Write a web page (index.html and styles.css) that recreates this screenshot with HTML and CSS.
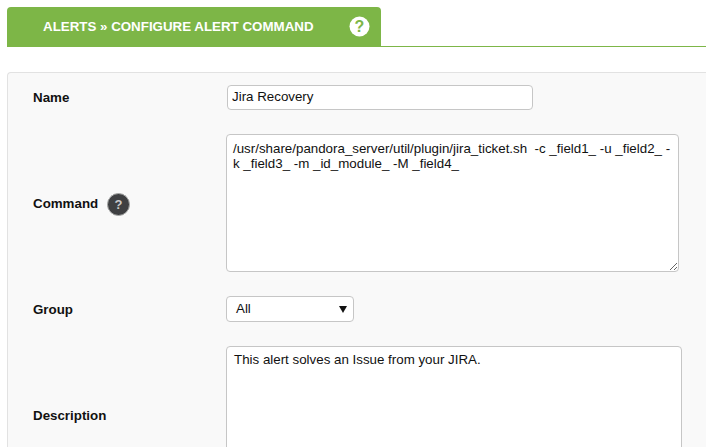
FILE: index.html
```html
<!DOCTYPE html>
<html lang="en">
<head>
  <meta charset="UTF-8">
  <meta name="viewport" content="width=device-width, initial-scale=1.0">
  <title>Configure alert command</title>
  <link rel="stylesheet" href="styles.css">
</head>
<body>
  <div class="page-header">
    <div class="header-tab">
      <h1>ALERTS &raquo; CONFIGURE ALERT COMMAND</h1>
      <svg class="help-icon" width="21" height="21" viewBox="0 0 21 21">
        <circle cx="10.5" cy="10.5" r="10" fill="#fff"/>
        <text x="10.5" y="16" text-anchor="middle" class="help-mark" fill="#7db647">?</text>
      </svg>
    </div>
  </div>
  <form class="alert-form">
    <div class="row row-name">
      <label class="label">Name</label>
      <input class="field name-input" type="text" value="Jira Recovery">
    </div>
    <div class="row row-command">
      <label class="label">Command
        <svg class="tip-icon" width="23" height="23" viewBox="0 0 23 23">
          <circle cx="11.5" cy="11.5" r="11" fill="#3f4042" stroke="#a9aaa9" stroke-width="1"/>
          <text x="11.5" y="16" text-anchor="middle" class="tip-mark" fill="#c9c9c9">?</text>
        </svg>
      </label>
      <textarea class="field command-input">/usr/share/pandora_server/util/plugin/jira_ticket.sh  -c _field1_ -u _field2_ -k _field3_ -m _id_module_ -M _field4_</textarea>
    </div>
    <div class="row row-group">
      <label class="label">Group</label>
      <div class="field group-select">
        <span>All</span>
        <span class="arrow"></span>
      </div>
    </div>
    <div class="row row-description">
      <label class="label">Description</label>
      <textarea class="field description-input">This alert solves an Issue from your JIRA.</textarea>
    </div>
  </form>
</body>
</html>
```
FILE: styles.css
```css
html, body {
  height: 100%;
  overflow: hidden;
}
body {
  margin: 0;
  padding: 7px 0 0 7px;
  box-sizing: border-box;
  display: flex;
  flex-direction: column;
  background-color: #fff;
  font-family: "Liberation Sans", Arial, sans-serif;
  font-size: 13.33px;
  color: #111;
}
.page-header {
  flex: none;
  border-bottom: 1px solid #7db647;
  height: 39px;
}
.header-tab {
  width: 374px;
  height: 40px;
  box-sizing: border-box;
  padding: 0 11px 0 36px;
  display: flex;
  align-items: center;
  justify-content: space-between;
  background-color: #7db647;
  border-radius: 4px 4px 0 0;
}
.header-tab h1 {
  margin: 0 0 2px;
  font-size: 13.33px;
  font-weight: bold;
  color: #fff;
}
.help-icon {
  margin-bottom: 1px;
}
.help-mark {
  font-size: 16px;
  font-weight: bold;
  font-family: "Liberation Sans", Arial, sans-serif;
}
.alert-form {
  flex: 1;
  min-height: 0;
  overflow: hidden;
  margin-top: 25px;
  box-sizing: border-box;
  padding-left: 25px;
  background-color: #f9f9f9;
  border: 1px solid #e2e2e2;
  border-width: 1px 0 0 1px;
  border-radius: 4px 0 0 0;
}
.row {
  display: flex;
  align-items: center;
  flex: none;
}
.label {
  width: 193px;
  flex: none;
  font-weight: bold;
  display: flex;
  align-items: center;
  gap: 9px;
}
.field {
  box-sizing: border-box;
  margin: 0;
  padding: 0 4px;
  background-color: #fff;
  border: 1px solid #c6c6c6;
  border-radius: 4px;
  font-family: "Liberation Sans", Arial, sans-serif;
  font-size: 13.33px;
  color: #111;
  outline: none;
}
.row-name {
  margin-top: 12px;
}
.name-input {
  width: 306px;
  height: 25px;
  margin-left: 1px;
  padding-bottom: 2px;
}
.row-command {
  margin-top: 24px;
}
.command-input {
  width: 453px;
  height: 138px;
  padding: 6px;
  line-height: 15px;
}
.row-group {
  margin-top: 24px;
}
.group-select {
  width: 128px;
  height: 26px;
  padding: 0 9px 2px;
  display: flex;
  align-items: center;
  justify-content: space-between;
}
.arrow {
  width: 0;
  height: 0;
  margin: 2px -3px 0 0;
  border-left: 4px solid transparent;
  border-right: 4px solid transparent;
  border-top: 7px solid #111;
}
.row-description {
  margin-top: 24px;
}
.description-input {
  width: 456px;
  height: 138px;
  padding: 5px 7px;
  line-height: 15px;
}
.tip-icon {
  margin-top: 3px;
}
.tip-mark {
  font-size: 13px;
  font-weight: bold;
  font-family: "Liberation Sans", Arial, sans-serif;
}
```
